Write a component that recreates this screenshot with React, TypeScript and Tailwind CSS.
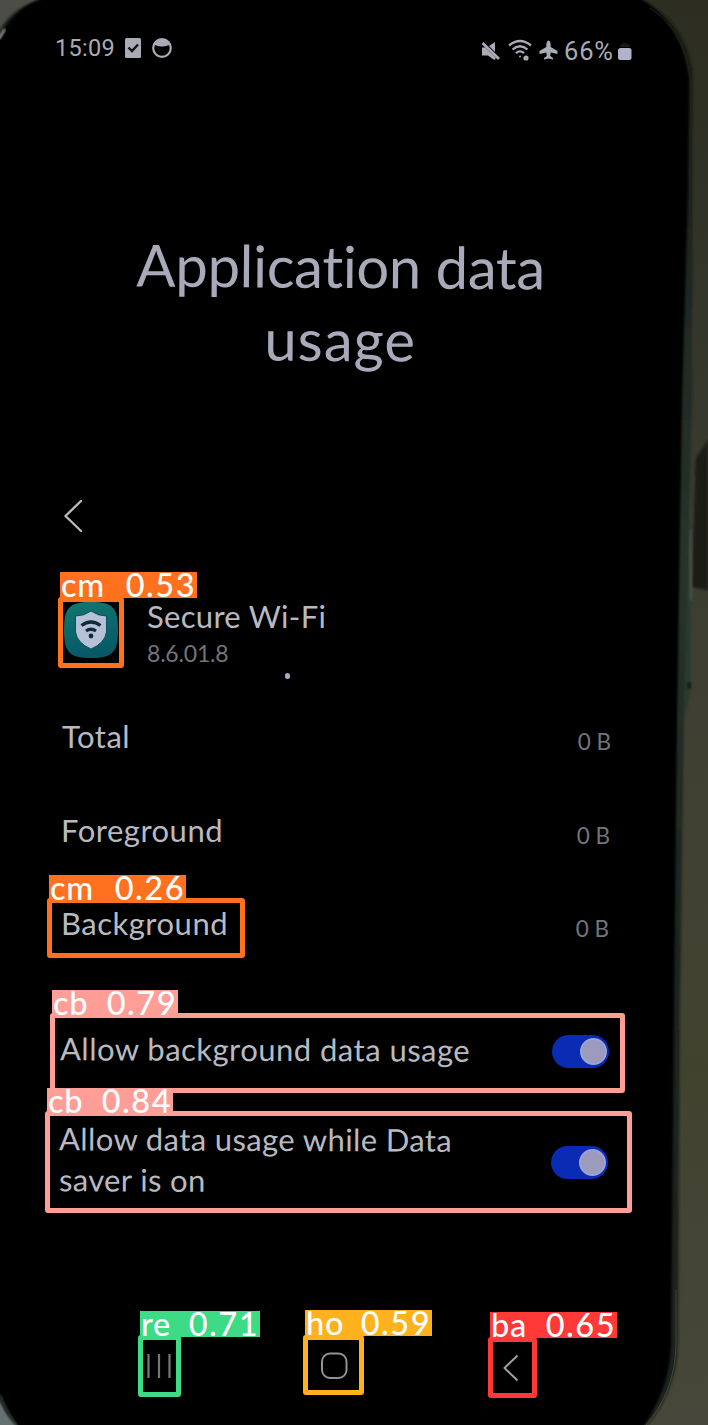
import React from "react";

function Backdrop() {
  return (
    <svg className="absolute inset-0 h-full w-full" viewBox="0 0 708 1425" aria-hidden="true">
      <defs>
        <linearGradient id="wall" x1="0" y1="0" x2="0" y2="1">
          <stop offset="0" stopColor="#2d2d21" />
          <stop offset="0.25" stopColor="#34372c" />
          <stop offset="0.5" stopColor="#3f4033" />
          <stop offset="0.75" stopColor="#41422e" />
          <stop offset="1" stopColor="#46473a" />
        </linearGradient>
        <linearGradient id="edge" x1="0" y1="0" x2="0" y2="1">
          <stop offset="0" stopColor="#181b14" />
          <stop offset="0.4" stopColor="#26332c" />
          <stop offset="0.7" stopColor="#1c221c" />
          <stop offset="1" stopColor="#20251c" />
        </linearGradient>
        <filter id="soft"><feGaussianBlur stdDeviation="1" /></filter>
      </defs>
      <rect width="708" height="1425" fill="url(#wall)" />
      <path d="M0 0H50L0 50Z" fill="#4b4d46" />
      <path d="M0 1370V1425H24Z" fill="#66706f" />
      <g filter="url(#soft)">
        <path d="M708 440L696 458L694 520L692 587L708 590Z" fill="#1a1b16" />
        <path d="M691 530L691 690L684 720L686 520Z" fill="#2c3a32" />
        <path d="M690 530L691 600" stroke="#555b4b" strokeWidth="1.5" />
        <path d="M689 682V689" stroke="#101711" strokeWidth="3" />
      </g>
      <path d="M0 30Q14 6 42 0H640Q684 18 693 72L692 400L684 720L680 1000L678 1345Q677 1390 648 1425H20Q5 1415 0 1395Z" fill="url(#edge)" filter="url(#soft)" />
      <path d="M-4 48Q10 6 50 -4H636Q681 20 689 78L688 190L682 400L677 720L674 1000L671 1345Q670 1388 642 1429H20Q4 1415 -4 1390Z" fill="#000" filter="url(#soft)" />
      <path d="M650 8Q687 32 691 86L690 190" fill="none" stroke="#20251b" strokeWidth="1" />
      <path d="M676 1290V1345Q675 1392 646 1425" fill="none" stroke="#41463a" strokeWidth="1" />
      <path d="M-1 39L5 29" stroke="#a4b5ad" strokeWidth="2" filter="url(#soft)" />
      <path d="M0 1395Q7 1413 17 1426" fill="none" stroke="#39443f" strokeWidth="2" filter="url(#soft)" />
    </svg>
  );
}

function StatusBar() {
  return (
    <div className="flex h-[26px] items-center text-[#a9abb5]">
      <span className="w-[60px] whitespace-nowrap font-['Roboto'] text-[23.5px] leading-[26px] tracking-[0.3px]">15:09</span>
      <svg className="ml-[10px] h-[22px] w-[16px]" viewBox="0 0 16 22">
        <rect y="1" width="16" height="20" rx="1.5" fill="currentColor" />
        <path d="M3.5 10.5L7 14L13 7.5" fill="none" stroke="#111318" strokeWidth="2.4" />
      </svg>
      <svg className="ml-[10px] h-[22px] w-[22px]" viewBox="0 0 22 22">
        <circle cx="11" cy="11" r="8.8" fill="none" stroke="currentColor" strokeWidth="2.2" />
        <path d="M2.5 8.5C3 0.5 19 0.5 19.5 8.5C16 7.5 15 10 11 9.5C7 10 6 7.5 2.5 8.5Z" fill="currentColor" />
      </svg>
      <svg className="ml-[308px] mt-[5px] h-[20px] w-[20px]" viewBox="0 0 20 20">
        <path d="M1 6.5H4L14.5 16.5V18.5H12.5L7 14.5H1Z" fill="currentColor" />
        <path d="M8 5L14 1V11Z" fill="currentColor" />
        <path d="M1.5 2L18 18" stroke="currentColor" strokeWidth="2.8" />
      </svg>
      <svg className="ml-[7px] mt-[3px] h-[22px] w-[24px]" viewBox="0 0 24 22" fill="none" stroke="currentColor" strokeWidth="2.3">
        <path d="M1 6.5Q12 -2.5 23 6.5" />
        <path d="M4.5 10.5Q12 4 19.5 10.5" />
        <path d="M8 14.2Q12 10.5 16 14.2" />
        <circle cx="12" cy="17.5" r="1" fill="currentColor" stroke="none" />
        <circle cx="18" cy="19" r="2.6" fill="currentColor" stroke="none" />
      </svg>
      <svg className="ml-[7px] mt-[4px] h-[20px] w-[19px]" viewBox="0 0 19 20" fill="currentColor">
        <path d="M9.5 0.5Q12 1 11.7 7L18.5 11V14L11.7 12.5L11.2 16L14 18V19.5L9.5 18.6L5 19.5V18L7.800 16L7.300 12.500L0.500 14V11L7.300 7Q7 1 9.500 0.500Z" />
      </svg>
      <span className="ml-[6px] mt-[5px] w-[52px] whitespace-nowrap font-['Roboto'] text-[25.5px] leading-[26px] tracking-[0.8px]">66%</span>
      <svg className="ml-[2px] mt-[5px] h-[20px] w-[14px]" viewBox="0 0 14 20">
        <path d="M2 6V3.5H4.5V2H9.5V3.5H12V6Z" fill="#171719" />
        <rect y="7" width="13.5" height="12" rx="2.5" fill="#b1b3cb" />
      </svg>
    </div>
  );
}

function Switch({ className = "" }: { className?: string }) {
  return (
    <button role="switch" aria-checked="true" className={`flex h-[33px] w-[57px] shrink-0 items-center justify-end rounded-full bg-[#0a2cb5] pr-[2px] ${className}`}>
      <span className="h-[27px] w-[27px] rounded-full border-2 border-[#9ba4d6] bg-[#9c9bbd]" />
    </button>
  );
}

function UsageRow({ label, className, labelClass, valueClass }: { label: string; className: string; labelClass: string; valueClass: string }) {
  return (
    <div className={`flex h-[40px] items-start justify-between ${className}`}>
      <span className={`whitespace-nowrap text-[31px] leading-[38px] ${labelClass}`}>{label}</span>
      <span className={`mt-[5px] whitespace-nowrap text-[22.5px] leading-[40px] text-[#73747c] ${valueClass}`}>0 B</span>
    </div>
  );
}

function Detection({ box, tag, name, score }: { box: string; tag: string; name: string; score: string }) {
  return (
    <>
      <div className={`absolute rounded-[3px] border-5 ${box}`} />
      <div className={`absolute flex items-center justify-between whitespace-nowrap pl-[1px] pr-[1px] text-[32.5px] font-medium leading-[26px] text-white ${tag}`}>
        <span className="tracking-[0.8px]">{name}</span>
        <span className="tracking-[1.5px]">{score}</span>
      </div>
    </>
  );
}

export default function App() {
  return (
    <main className="relative h-[1425px] w-[708px] overflow-hidden bg-black font-['Lato',sans-serif] text-[#b9bac1] [font-variant-ligatures:none]">
      <Backdrop />
      <div className="relative flex flex-col">
        <div className="pl-[55px] pt-[35px]"><StatusBar /></div>
        <h1 className="mt-[168px] w-[681px] rotate-[0.4deg] text-center text-[58px] leading-[73px] text-[#a8aab9]">
          <span className="tracking-[-0.3px]">Application data</span><br /><span className="tracking-[1px]">usage</span>
        </h1>
        <div className="mt-[123px] pl-[62px]">
          <svg className="h-[36px] w-[22px]" viewBox="0 0 22 36" fill="none" stroke="#b8b9b9" strokeWidth="2.4" strokeLinecap="round" strokeLinejoin="round">
            <path d="M19 3L3.5 18L19 33" />
          </svg>
        </div>
        <section className="mt-[62px] flex h-[76px] pl-[63px]">
          <svg className="mt-[5px] h-[58px] w-[56px]" viewBox="0 0 56 58">
            <defs>
              <linearGradient id="teal" x1="0" y1="0" x2="0.2" y2="1">
                <stop stopColor="#12776d" />
                <stop offset="1" stopColor="#075967" />
              </linearGradient>
            </defs>
            <path d="M28 1C50 1 55 7 55 29S50 57 28 57S1 51 1 29S6 1 28 1Z" fill="url(#teal)" />
            <path d="M28 10Q35 15 43.500 15V31Q42 42 28 48Q14 42 12.500 31V15Q21 15 28 10Z" fill="#b5c1d6" stroke="#0b505d" strokeWidth="1" />
            <path d="M18.5 24.5Q28 17.5 37.5 24.500M23 30Q28 26.500 33 30" fill="none" stroke="#122938" strokeWidth="3.3" />
            <circle cx="28" cy="35" r="2.4" fill="#122938" />
          </svg>
          <div className="ml-[28px] flex flex-col pt-[3px]">
            <span className="whitespace-nowrap text-[31px] leading-[34px] tracking-[0.3px]">Secure Wi-Fi</span>
            <span className="mt-[2px] whitespace-nowrap text-[23px] leading-[36px] tracking-[-0.2px] text-[#74757a]">8.6.01.8</span>
          </div>
        </section>
        <section className="flex flex-col pl-[61px] pr-[97px]">
          <UsageRow label="Total" className="mt-[45px]" labelClass="pl-px tracking-[0.5px]" valueClass="" />
          <UsageRow label="Foreground" className="mt-[54px]" labelClass="tracking-[0.5px]" valueClass="mr-[1px]" />
          <UsageRow label="Background" className="mt-[53px]" labelClass="tracking-[0.5px]" valueClass="mr-[2px]" />
        </section>
        <section className="flex flex-col pl-[60px] pr-[99px]">
          <div className="mt-[86px] flex h-[40px] justify-between">
            <span className="rotate-[0.2deg] whitespace-nowrap text-[31px] leading-[39px] tracking-[0.47px]">Allow background data usage</span>
            <Switch className="mt-[5px]" />
          </div>
          <div className="mt-[50px] flex h-[82px] justify-between pr-px">
            <span className="-ml-px -mt-px rotate-[0.2deg] whitespace-nowrap text-[31px] leading-[41px] tracking-[0.38px]">Allow data usage while Data<br />saver is on</span>
            <Switch className="mt-[26px]" />
          </div>
        </section>
        <nav className="mt-[148px] flex h-[32px] items-center pl-[145px]">
          <svg className="h-[28px] w-[28px]" viewBox="0 0 28 28" stroke="#77777b" strokeWidth="2.2">
            <path d="M3.5 2V26M14 2V26M24.5 2V26" />
          </svg>
          <svg className="ml-[147px] h-[28px] w-[28px]" viewBox="0 0 28 28" fill="none" stroke="#929297" strokeWidth="2">
            <rect x="2" y="1.5" width="24.5" height="24.5" rx="8" />
          </svg>
          <svg className="ml-[154px] mt-[3px] h-[30px] w-[18px]" viewBox="0 0 18 30" fill="none" stroke="#a0a0a3" strokeWidth="2">
            <path d="M15.5 2.5L2.5 15L15.5 27.5" />
          </svg>
        </nav>
      </div>
      <div className="absolute left-[285px] top-[673px] h-[6px] w-[5px] rounded-full bg-[#aaaac8]" />

      <Detection name="cm" score="0.53" box="left-[58px] top-[597px] h-[71px] w-[66px] border-[#ff701f]" tag="left-[60px] top-[572px] h-[26px] w-[137px] bg-[#ff701f]" />
      <Detection name="cm" score="0.26" box="left-[47px] top-[898px] h-[60px] w-[198px] border-[#ff701f]" tag="left-[49px] top-[875px] h-[26px] w-[137px] bg-[#ff701f]" />
      <Detection name="cb" score="0.79" box="left-[50px] top-[1013px] h-[80px] w-[575px] border-[#ff9d97]" tag="left-[52px] top-[990px] h-[26px] w-[126px] bg-[#ff9d97]" />
      <Detection name="cb" score="0.84" box="left-[45px] top-[1111px] h-[102px] w-[587px] border-[#ff9d97]" tag="left-[47px] top-[1088px] h-[26px] w-[126px] bg-[#ff9d97]" />
      <Detection name="re" score="0.71" box="left-[138px] top-[1335px] h-[62px] w-[43px] border-[#3ddb86]" tag="left-[140px] top-[1311px] h-[26px] w-[120px] bg-[#3ddb86]" />
      <Detection name="ho" score="0.59" box="left-[303px] top-[1335px] h-[60px] w-[61px] border-[#ffb21d]" tag="left-[305px] top-[1310px] h-[26px] w-[127px] bg-[#ffb21d]" />
      <Detection name="ba" score="0.65" box="left-[488px] top-[1337px] h-[61px] w-[49px] border-[#ff3838]" tag="left-[490px] top-[1312px] h-[26px] w-[127px] bg-[#ff3838]" />
    </main>
  );
}
